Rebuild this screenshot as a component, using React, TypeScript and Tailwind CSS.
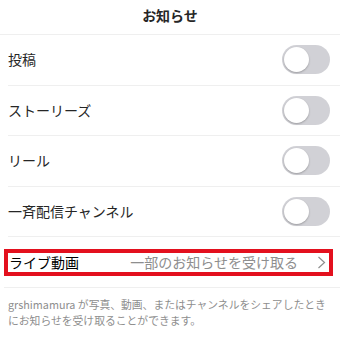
const rows = ['投稿', 'ストーリーズ', 'リール', '一斉配信チャンネル'];

function Toggle() {
  return (
    <div className="w-[48px] h-[29px] rounded-full bg-[#d1d1d6] p-[2px] flex items-center">
      <div className="w-[25px] h-[25px] rounded-full bg-white shadow-[0_1px_2px_rgba(0,0,0,0.25)]" />
    </div>
  );
}

export default function App() {
  return (
    <div
      className="w-[340px] h-[342px] bg-white text-[#262626] overflow-hidden"
      style={{ fontFamily: '"Noto Sans CJK JP", "Noto Sans", sans-serif' }}
    >
      <div className="h-[35px] border-b border-[#efefef] flex items-center justify-center pb-[4px]">
        <span className="text-[14px] font-bold">お知らせ</span>
      </div>

      {rows.map((label) => (
        <div key={label} className="ml-[8px] h-[50.6px] border-b border-[#efefef] flex items-center justify-between pr-[10px]">
          <span className="text-[14px]">{label}</span>
          <Toggle />
        </div>
      ))}

      <div className="ml-[4px] h-[50.6px] border-b border-[#efefef] flex items-center">
        <div className="w-[329px] h-[27px] border-[4px] border-[#e3101e] flex items-center pl-[1px] pr-[3px]">
          <span className="text-[14px] text-black">ライブ動画</span>
          <span className="ml-auto text-[14px] text-[#8e8e8e]">一部のお知らせを受け取る</span>
          <svg width="9" height="13" viewBox="0 0 9 13" className="ml-[19px]">
            <path d="M1.5 1 L7.5 6.5 L1.5 12" fill="none" stroke="#8e8e8e" strokeWidth="1.2" />
          </svg>
        </div>
      </div>

      <p className="px-[8px] pt-[8px] text-[10.8px] leading-[16px] text-[#8e8e8e]">
        grshimamura が写真、動画、またはチャンネルをシェアしたとき
        <br />
        にお知らせを受け取ることができます。
      </p>
    </div>
  );
}
